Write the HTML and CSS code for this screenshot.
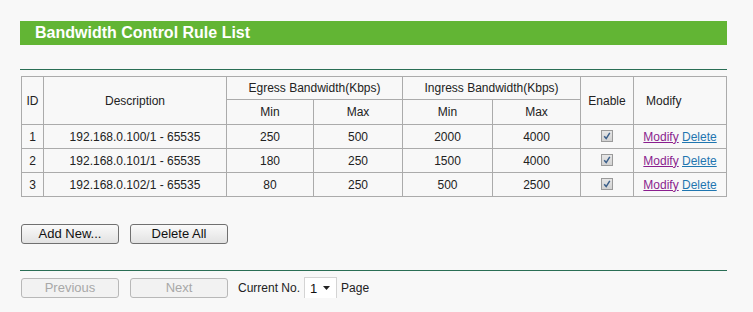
FILE: index.html
```html
<!DOCTYPE html>
<html>
<head>
<meta charset="utf-8">
<link rel="stylesheet" href="styles.css">
</head>
<body>
<div class="page">
  <div class="title">Bandwidth Control Rule List</div>
  <div class="rule"></div>
  <table class="list">
    <colgroup>
      <col class="c-id"><col class="c-desc"><col class="c-emin"><col class="c-emax"><col class="c-imin"><col class="c-imax"><col class="c-en"><col class="c-mod">
    </colgroup>
    <tr class="h1">
      <td rowspan="2">ID</td>
      <td rowspan="2">Description</td>
      <td colspan="2">Egress Bandwidth(Kbps)</td>
      <td colspan="2">Ingress Bandwidth(Kbps)</td>
      <td rowspan="2">Enable</td>
      <td rowspan="2" class="hmod">Modify</td>
    </tr>
    <tr class="h2">
      <td>Min</td>
      <td>Max</td>
      <td>Min</td>
      <td>Max</td>
    </tr>
    <tr>
      <td>1</td><td>192.168.0.100/1 - 65535</td><td>250</td><td>500</td><td>2000</td><td>4000</td>
      <td><span class="chk"><svg width="8" height="8" viewBox="0 0 8 8"><path d="M1.2 4.3 L3.2 6.6 L6.8 0.8" fill="none" stroke="#3b5f8a" stroke-width="1.5"/></svg></span></td>
      <td><a class="lm" href="#">Modify</a> <a class="ld" href="#">Delete</a></td>
    </tr>
    <tr>
      <td>2</td><td>192.168.0.101/1 - 65535</td><td>180</td><td>250</td><td>1500</td><td>4000</td>
      <td><span class="chk"><svg width="8" height="8" viewBox="0 0 8 8"><path d="M1.2 4.3 L3.2 6.6 L6.8 0.8" fill="none" stroke="#3b5f8a" stroke-width="1.5"/></svg></span></td>
      <td><a class="lm" href="#">Modify</a> <a class="ld" href="#">Delete</a></td>
    </tr>
    <tr>
      <td>3</td><td>192.168.0.102/1 - 65535</td><td>80</td><td>250</td><td>500</td><td>2500</td>
      <td><span class="chk"><svg width="8" height="8" viewBox="0 0 8 8"><path d="M1.2 4.3 L3.2 6.6 L6.8 0.8" fill="none" stroke="#3b5f8a" stroke-width="1.5"/></svg></span></td>
      <td><a class="lm" href="#">Modify</a> <a class="ld" href="#">Delete</a></td>
    </tr>
  </table>
  <div class="actions">
    <button class="btn">Add New...</button>
    <button class="btn">Delete All</button>
  </div>
  <div class="rule rule2"></div>
  <div class="pager">
    <button class="btn" disabled>Previous</button>
    <button class="btn" disabled>Next</button>
    <span class="cur">Current No.</span>
    <span class="sel">1<svg width="7" height="4" viewBox="0 0 7 4"><path d="M0 0 H7 L3.5 4 Z" fill="#222"/></svg></span>
    <span class="pg">Page</span>
  </div>
</div>
</body>
</html>
```
FILE: styles.css
```css
html, body {
  margin: 0;
  padding: 0;
  background: #f8f8f8;
}
body {
  font-family: "Liberation Sans", Arial, sans-serif;
  font-size: 12px;
  color: #222;
}
.page {
  padding: 21px 0 0 20px;
  width: 707px;
}
.title {
  background: #62b534;
  color: #fff;
  font-weight: bold;
  font-size: 16px;
  height: 24px;
  line-height: 24px;
  padding-left: 15px;
}
.rule {
  margin-top: 24px;
  height: 1px;
  background: #2a6e55;
}
.list {
  margin-top: 6px;
  margin-left: 1px;
  width: 705px;
  border-collapse: collapse;
  table-layout: fixed;
}
.list td {
  border: 1px solid #ababab;
  text-align: center;
  padding: 0;
  height: 23px;
  white-space: nowrap;
}
.list .h1 td { height: 22px; }
.list .h2 td { height: 24px; }
.c-id { width: 22px; }
.c-desc { width: 183px; }
.c-emin { width: 87px; }
.c-emax { width: 89px; }
.c-imin { width: 90px; }
.c-imax { width: 88px; }
.c-en { width: 53px; }
.c-mod { width: 93px; }
.list td.hmod {
  text-align: left;
  padding-left: 12px;
}
.chk {
  display: inline-flex;
  align-items: center;
  justify-content: center;
  width: 10px;
  height: 10px;
  border: 1px solid #9a9a9a;
  background: linear-gradient(#e6e6e6, #d2d2d2);
  vertical-align: middle;
  margin-top: -2px;
}
.lm { color: #8a1e8e; }
.ld { color: #1f76b0; }
.actions {
  margin-top: 27px;
  margin-left: 1px;
  display: flex;
  gap: 11px;
  height: 20px;
}
.btn {
  width: 98px;
  height: 20px;
  padding: 0;
  font-family: "Liberation Sans", Arial, sans-serif;
  font-size: 13px;
  color: #111;
  border: 1px solid #707070;
  border-radius: 3px;
  background: linear-gradient(#fafafa, #e2e2e2);
  line-height: 18px;
}
.btn:disabled {
  color: #a8a8a8;
  border-color: #b8b8b8;
  background: #f2f2f2;
}
.rule2 {
  margin-top: 26px;
}
.pager {
  margin-top: 7px;
  margin-left: 1px;
  display: flex;
  align-items: center;
  gap: 11px;
  height: 20px;
}
.cur { margin-left: -1px; font-size: 12px; }
.sel {
  margin-left: -7px;
  width: 33px;
  height: 22px;
  box-sizing: border-box;
  border: 1px solid #d4d4d4;
  background: #fff;
  display: inline-flex;
  align-items: center;
  justify-content: space-between;
  padding: 0 6px 0 5px;
  font-size: 13px;
  color: #111;
}
.pg { margin-left: -7px; font-size: 12px; }
```
